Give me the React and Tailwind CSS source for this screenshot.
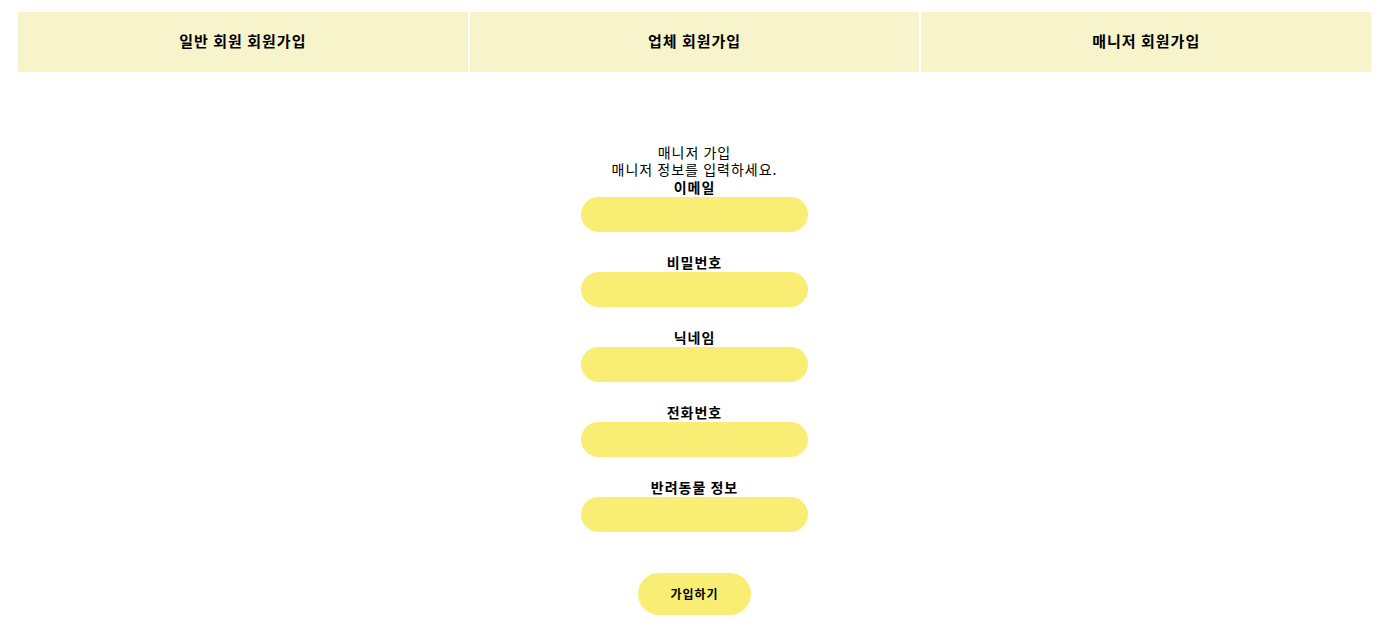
export default function App() {
  const fields = ["이메일", "비밀번호", "닉네임", "전화번호", "반려동물 정보"];
  const tabs = ["일반 회원 회원가입", "업체 회원가입", "매니저 회원가입"];
  return (
    <div
      className="min-h-[638px] bg-white text-black pl-[18px] pr-[27px] pt-[12px]"
      style={{ fontFamily: '"Noto Sans CJK KR", "Noto Sans", sans-serif' }}
    >
      <div className="flex gap-[2px]">
        {tabs.map((t) => (
          <div
            key={t}
            className="flex-1 h-[60px] pb-[1px] bg-[#f7f3cb] flex items-center justify-center text-[15px] tracking-[1px] font-bold"
          >
            {t}
          </div>
        ))}
      </div>
      <div className="flex flex-col items-center pt-[71px]">
        <div className="text-[14px] leading-[18px] tracking-[1px] text-center">매니저 가입</div>
        <div className="text-[14px] leading-[17px] tracking-[1px] text-center">매니저 정보를 입력하세요.</div>
        {fields.map((f) => (
          <div key={f} className="flex flex-col items-center mb-[21px]">
            <label className="text-[14px] font-bold leading-[18px] tracking-[1px] pb-[1px]">{f}</label>
            <input className="w-[227px] h-[35px] rounded-full bg-[#f9ee73] outline-none border-0 px-4" />
          </div>
        ))}
        <button className="mt-[20px] w-[113px] h-[42px] rounded-full bg-[#f9ee73] text-[12px] tracking-[1px] font-bold">
          가입하기
        </button>
      </div>
    </div>
  );
}
